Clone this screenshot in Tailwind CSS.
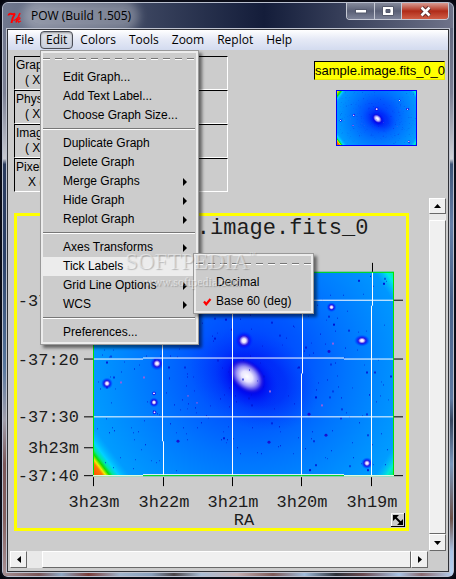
<!DOCTYPE html>
<html lang="en">
<head>
<meta charset="utf-8">
<title>POW (Build 1.505)</title>
<script src="https://cdn.jsdelivr.net/npm/@tailwindcss/browser@4"></script>
</head>
<body class="h-screen overflow-hidden bg-[#05060f] text-black">
<div class="flex h-full flex-col overflow-hidden rounded-lg border-2 border-[#0b0d18] bg-[#6b7287]">
<div class="flex min-h-0 flex-1 flex-col rounded-md border border-[#b9bfce]">

  <header class="flex h-[25px] shrink-0 justify-between rounded-t-md bg-linear-to-r from-[#70788e] via-[#141d3a] via-58% to-[#6f7389] pr-1">
    <div class="flex items-center gap-2 pl-1">
      <svg class="mt-1 h-[14px] w-4" viewBox="0 0 16 14" fill="none" stroke="#f00" aria-hidden="true">
        <path d="M1.500 4.500C1.500 2.500 3.500 2.500 5 3C6.500 3.300 7.500 3 8 2.500C6 5.500 5 8 4.500 12" stroke-width="1.900"/><path d="M13 2L9 11.500" stroke-width="1.700"/><path d="M6.500 9.500L9 8.500C10.500 6.500 13 6 13 7.200C13 8.500 10.500 8.800 10.500 8.800L11.500 11.200L14 10" stroke-width="1.300"/>
      </svg>
      <h1 class="rounded-full bg-white/30 font-['Open_Sans',sans-serif] text-[12px] leading-4 shadow-[0_0_10px_8px_rgba(255,255,255,0.3)]">POW (Build 1.505)</h1>
    </div>
    <div class="flex h-[17px] overflow-hidden rounded-b border border-t-0 border-[#c5c9d4]">
      <button class="grid w-7 place-items-center border-r border-[#c5c9d4] bg-linear-to-b from-[#858a9b] via-[#5a6076] via-50% to-[#7c8297]" aria-label="Minimize"><svg width="12" height="6" viewBox="0 0 12 6" aria-hidden="true"><rect x=".5" y="1.500" width="11" height="3.500" fill="#fff" stroke="#555a6c"/></svg></button>
      <button class="grid w-[27px] place-items-center border-r border-[#c5c9d4] bg-linear-to-b from-[#858a9b] via-[#5a6076] via-50% to-[#7c8297]" aria-label="Maximize"><svg width="12" height="10" viewBox="0 0 12 10" aria-hidden="true"><path fill="#fff" stroke="#555a6c" fill-rule="evenodd" d="M.5.5h11v9H.5zM4 3.500v3h4v-3z"/></svg></button>
      <button class="grid w-[46px] place-items-center bg-linear-to-b from-[#d79a92] via-[#b02a18] via-50% to-[#cf5c45]" aria-label="Close"><svg width="13" height="11" viewBox="0 0 13 11" aria-hidden="true"><path d="M2.500 1.500L10.500 9.500M10.500 1.500L2.500 9.500" stroke="#5a2a2a" stroke-width="4.500"/><path d="M2.500 1.500L10.500 9.500M10.500 1.500L2.500 9.500" stroke="#fff" stroke-width="2.600"/></svg></button>
    </div>
  </header>

  <div class="flex min-h-0 flex-1">
    <div class="w-[3px] shrink-0 bg-[linear-gradient(to_bottom,#6f778e_0%,#7b8094_12%,#c6c8d0_24%,#2a3a5c_25%,#2b4068_42%,#56759c_62%,#a09eab_72%,#7a5658_80%,#85605f_90%,#a58f93_100%)]"></div>

    <main class="flex min-w-0 flex-1 flex-col border border-[#bfc3cf]">
    <div class="flex min-h-0 flex-1 flex-col border border-[#2e3036] bg-[#cccccc] pb-[3px] font-['Liberation_Sans',Arial,sans-serif] text-[12px]">

      <nav class="relative z-10 flex h-5 shrink-0 bg-linear-to-b from-white via-[#e6eaf6] via-45% to-[#d3dbef] font-['Open_Sans',sans-serif] text-[12px] leading-5">
        <button class="pr-[6px] pl-[7px]">File</button>
        <div class="relative">
          <button class="h-[18px] rounded-sm border border-[#4a4d55] bg-linear-to-b from-[#e4e6ea] to-[#c9d0df] px-[5px] leading-4 shadow-[inset_0_1px_2px_rgba(0,0,0,0.35)]" aria-expanded="true">Edit</button>

          <div role="menu" class="absolute top-5 left-0 w-[159px] border border-[#999] bg-[#cccccc] font-['Liberation_Sans',Arial,sans-serif] text-[12px] leading-[19px] shadow-[3px_3px_3px_rgba(0,0,0,0.5)]">
            <div class="border-2 border-[#ececec] pr-px">
              <div class="h-[15px] pt-[5px]"><div class="h-px bg-[repeating-linear-gradient(to_right,#777_0_7px,transparent_7px_12px)]"></div><div class="h-px bg-[repeating-linear-gradient(to_right,#fff_0_7px,transparent_7px_12px)]"></div></div>
              <button role="menuitem" class="block w-full pl-5 text-left">Edit Graph...</button>
              <button role="menuitem" class="block w-full pl-5 text-left">Add Text Label...</button>
              <button role="menuitem" class="block w-full pl-5 text-left">Choose Graph Size...</button>
              <hr class="mt-[3px] mb-1 h-[2px] border-0 border-t border-b border-t-[#777] border-b-white">
              <button role="menuitem" class="block w-full pl-5 text-left">Duplicate Graph</button>
              <button role="menuitem" class="block w-full pl-5 text-left">Delete Graph</button>
              <button role="menuitem" class="flex w-full items-center justify-between pr-2 pl-5">Merge Graphs<svg width="4" height="8" viewBox="0 0 4 8" aria-hidden="true"><path d="M0 0L4 4L0 8z"/></svg></button>
              <button role="menuitem" class="flex w-full items-center justify-between pr-2 pl-5">Hide Graph<svg width="4" height="8" viewBox="0 0 4 8" aria-hidden="true"><path d="M0 0L4 4L0 8z"/></svg></button>
              <button role="menuitem" class="flex w-full items-center justify-between pr-2 pl-5">Replot Graph<svg width="4" height="8" viewBox="0 0 4 8" aria-hidden="true"><path d="M0 0L4 4L0 8z"/></svg></button>
              <hr class="mt-[3px] mb-1 h-[2px] border-0 border-t border-b border-t-[#777] border-b-white">
              <button role="menuitem" class="flex w-full items-center justify-between pr-2 pl-5">Axes Transforms<svg width="4" height="8" viewBox="0 0 4 8" aria-hidden="true"><path d="M0 0L4 4L0 8z"/></svg></button>
              <button role="menuitem" class="block w-full bg-[#ececec] pl-5 text-left" aria-expanded="true">Tick Labels</button>
              <button role="menuitem" class="flex w-full items-center justify-between pr-2 pl-5">Grid Line Options<svg width="4" height="8" viewBox="0 0 4 8" aria-hidden="true"><path d="M0 0L4 4L0 8z"/></svg></button>
              <button role="menuitem" class="flex w-full items-center justify-between pr-2 pl-5">WCS<svg width="4" height="8" viewBox="0 0 4 8" aria-hidden="true"><path d="M0 0L4 4L0 8z"/></svg></button>
              <hr class="mt-[3px] mb-1 h-[2px] border-0 border-t border-b border-t-[#777] border-b-white">
              <button role="menuitem" class="block w-full pl-5 text-left">Preferences...</button>
            </div>

            <div role="menu" class="absolute top-[202px] left-[152px] w-[121px] border border-[#999] bg-[#cccccc] shadow-[3px_3px_3px_rgba(0,0,0,0.5)]">
              <div class="border-2 border-[#ececec]">
                <div class="h-[17px] pt-[7px]"><div class="h-px bg-[repeating-linear-gradient(to_right,#777_0_7px,transparent_7px_12px)]"></div><div class="h-px bg-[repeating-linear-gradient(to_right,#fff_0_7px,transparent_7px_12px)]"></div></div>
                <button role="menuitemcheckbox" aria-checked="false" class="block w-full pl-5 text-left">Decimal</button>
                <button role="menuitemcheckbox" aria-checked="true" class="flex w-full items-center gap-1 pl-[7px] text-left"><svg width="9" height="8" viewBox="0 0 9 8" fill="none" stroke="#f00" stroke-width="2.200" aria-hidden="true"><path d="M1 3.500L3.200 6.300L7.500 1"/></svg>Base 60 (deg)</button>
              </div>
            </div>

            <div class="pointer-events-none absolute top-[199px] left-[84px] w-[136px] font-['Liberation_Serif',serif]">
              <p class="text-[23px] leading-6 whitespace-nowrap text-white/45 [text-shadow:1px_1px_1px_rgba(90,90,90,0.35)]">SOFTPEDIA<sup class="-top-3 text-[7px]">™</sup></p>
              <p class="pl-5 text-[12px] leading-4 text-white/50 [text-shadow:1px_1px_1px_rgba(90,90,90,0.4)]">www.softpedia.com</p>
            </div>
          </div>
        </div>
        <button class="pr-[6px] pl-[7px]">Colors</button>
        <button class="pr-[6px] pl-[7px]">Tools</button>
        <button class="pr-[6px] pl-[7px]">Zoom</button>
        <button class="pr-[6px] pl-[7px]">Replot</button>
        <button class="pr-[6px] pl-[7px]">Help</button>
      </nav>

      <section class="flex h-[148px] shrink-0 justify-between pt-[6px] pr-[3px] pl-[6px] leading-[15px]">
        <dl class="w-[214px]">
          <div class="h-[34px] border border-t-black border-r-white border-b-white border-l-black pt-px pl-px"><dt>Graph</dt><dd class="pl-[9px]">( X, Y )</dd></div>
          <div class="h-[34px] border border-t-black border-r-white border-b-white border-l-black pt-px pl-px"><dt>Physical</dt><dd class="pl-[9px]">( X, Y )</dd></div>
          <div class="h-[34px] border border-t-black border-r-white border-b-white border-l-black pt-px pl-px"><dt>Image</dt><dd class="pl-[9px]">( X, Y )</dd></div>
          <div class="h-[34px] border border-t-black border-r-white border-b-white border-l-black pt-px pl-px"><dt>Pixel</dt><dd class="pl-3">X ( x, y )</dd></div>
        </dl>
        <figure class="flex w-[131px] flex-col pt-[5px]">
          <figcaption class="h-[19px] border border-t-black border-r-[#e8e800] border-b-[#e8e800] border-l-black bg-[#ffff00] text-[13px] leading-[17px] whitespace-nowrap">sample.image.fits_0_0</figcaption>
          <svg class="mt-[10px] ml-[22px] h-14 w-[81px] border border-[#0000ff]" viewBox="93 272 301 205" preserveAspectRatio="none" role="img" aria-label="Image thumbnail"><use href="#sky"/></svg>
        </figure>
      </section>

      <section class="flex min-h-0 flex-1 justify-between pr-[2px] pl-[6px]">
        <div class="mt-[15px] mr-5 mb-5 flex-1 border-[3px] border-[#ffff00]">
          <svg class="block h-full w-full" viewBox="17 216 389 313" preserveAspectRatio="none" role="img" aria-label="sample.image.fits_0 plot">
            <defs>
              <radialGradient id="bg" gradientUnits="userSpaceOnUse" cx="250" cy="365" r="190"><stop offset="0" stop-color="#0038ff"/><stop offset=".3" stop-color="#0058ff"/><stop offset=".5" stop-color="#0074ff"/><stop offset=".75" stop-color="#0090ff"/><stop offset="1" stop-color="#00aaff"/></radialGradient>
              <radialGradient id="halo"><stop offset="0" stop-color="#0000e8"/><stop offset=".5" stop-color="#0008f0" stop-opacity=".85"/><stop offset="1" stop-color="#0030ff" stop-opacity="0"/></radialGradient>
              <radialGradient id="core"><stop offset="0" stop-color="#fff"/><stop offset=".3" stop-color="#e8e4ff"/><stop offset=".55" stop-color="#9c94f4"/><stop offset=".8" stop-color="#2a20e4"/><stop offset="1" stop-color="#0000e0" stop-opacity="0"/></radialGradient>
              <radialGradient id="star"><stop offset="0" stop-color="#fff"/><stop offset=".2" stop-color="#e8e0ff"/><stop offset=".48" stop-color="#2818e0"/><stop offset=".65" stop-color="#0010ff" stop-opacity=".6"/><stop offset="1" stop-color="#0040ff" stop-opacity="0"/></radialGradient>
              <linearGradient id="bl" gradientUnits="userSpaceOnUse" x1="93" y1="477" x2="117" y2="459"><stop offset=".1" stop-color="#ff5a00"/><stop offset=".28" stop-color="#ff7800"/><stop offset=".36" stop-color="#f0f000"/><stop offset=".46" stop-color="#10dd00"/><stop offset=".56" stop-color="#00e6a0"/><stop offset=".7" stop-color="#00d2ff"/><stop offset="1" stop-color="#00b4ff" stop-opacity="0"/></linearGradient>
              <linearGradient id="tl" gradientUnits="userSpaceOnUse" x1="93" y1="272" x2="117" y2="290"><stop offset=".1" stop-color="#ffe000"/><stop offset=".4" stop-color="#10dd00"/><stop offset=".6" stop-color="#00d2ff"/><stop offset=".9" stop-color="#00b4ff" stop-opacity="0"/></linearGradient>
              <linearGradient id="tr" gradientUnits="userSpaceOnUse" x1="394" y1="272" x2="380" y2="281"><stop offset="0" stop-color="#00ff90"/><stop offset=".4" stop-color="#00e8e8"/><stop offset="1" stop-color="#00c0ff" stop-opacity="0"/></linearGradient>
              <linearGradient id="br" gradientUnits="userSpaceOnUse" x1="394" y1="477" x2="380" y2="468"><stop offset="0" stop-color="#00f060"/><stop offset=".4" stop-color="#00e8d8"/><stop offset="1" stop-color="#00c0ff" stop-opacity="0"/></linearGradient>
              <g id="sky">
                <rect x="93" y="272" width="301" height="205" fill="url(#bg)"/>
                <ellipse cx="254" cy="380" rx="68" ry="48" fill="url(#halo)" opacity=".45" transform="rotate(25 254 380)"/>
                <ellipse cx="248" cy="380" rx="36" ry="27" fill="url(#halo)" transform="rotate(40 248 380)"/>
                <ellipse cx="247" cy="377" rx="21" ry="15" fill="url(#core)" transform="rotate(42 247 377)"/>
                <rect x="93" y="432" width="60" height="45" fill="url(#bl)"/>
                <rect x="93" y="272" width="40" height="40" fill="url(#tl)"/>
                <rect x="364" y="272" width="30" height="30" fill="url(#tr)"/>
                <rect x="364" y="447" width="30" height="30" fill="url(#br)"/>
                <g id="specks" fill="#0010d0"></g>
                <g fill="url(#star)">
                  <circle cx="244" cy="341" r="10"/><ellipse cx="362" cy="341" rx="8" ry="6"/><circle cx="331.500" cy="307.500" r="5"/><circle cx="157" cy="364" r="7"/><circle cx="107" cy="384" r="6"/><circle cx="154" cy="403" r="5"/><circle cx="367" cy="464" r="6"/><circle cx="154.500" cy="413" r="2.500"/><circle cx="154" cy="394" r="2.500"/>
                </g>
                <g fill="#1a10d0"><circle cx="269" cy="443" r="1.500"/><circle cx="326" cy="436" r="1.500"/><circle cx="178" cy="442" r="1.500"/><circle cx="329" cy="352" r="1.500"/><circle cx="309" cy="415" r="1.500"/></g>
                <g fill="#9060e0"><rect x="120" y="382" width="2" height="2"/><rect x="143" y="377" width="2" height="2"/><rect x="196" y="403" width="2" height="1"/><rect x="269" y="391" width="2" height="2"/><rect x="332" y="343" width="2" height="2"/><rect x="321" y="405" width="2" height="2"/><rect x="187" y="396" width="2" height="1"/></g>
              </g>
            </defs>
            <use href="#sky"/>
            <g fill="none" stroke="#fff">
              <path d="M162.500 272V442M163.500 442V477M232.500 272V477M302.500 272V374M301.500 374V477M372.500 272V306M371.500 306V477"/>
              <path d="M93 300.500H394M93 359.500H143M143 358.500H344M344 359.500H394M93 417.500H394M93 476.500H143M143 475.500H344M344 476.500H394"/>
            </g>
            <rect x="93.500" y="272.500" width="300" height="204" fill="none" stroke="#00e400"/>
            <path d="M93 476.500H143M344 476.500H394" stroke="#fff"/>
            <path fill="none" stroke="#000" d="M93.500 478V487M163.500 478V487M232.500 478V487M301.500 478V487M371.500 478V487M372.500 263V272M84 300.500H93M84 359.500H93M84 417.500H93M84 448.500H93M84 476.500H93M394 300.500H403M394 359.500H403M394 417.500H403M394 476.500H403"/>
            <g font-family="'Liberation Mono','Courier New',monospace" font-size="17" fill="#1c1c1c">
              <text x="243" y="234" text-anchor="middle" font-size="22">sample.image.fits_0</text>
              <g text-anchor="end"><text x="79" y="306">-37:10</text><text x="79" y="365">-37:20</text><text x="79" y="423">-37:30</text><text x="79" y="454">3h23m</text><text x="79" y="482">-37:40</text></g>
              <g text-anchor="middle"><text x="94" y="508">3h23m</text><text x="164" y="508">3h22m</text><text x="233" y="508">3h21m</text><text x="302" y="508">3h20m</text><text x="372" y="508">3h19m</text><text x="244" y="526">RA</text></g>
            </g>
            <g><rect x="391" y="514" width="14" height="14" fill="#000"/><rect x="391" y="514" width="13" height="13" fill="#fff"/><rect x="392" y="515" width="12" height="12" fill="#ccc"/><path d="M395 518L401 524" stroke="#000" stroke-width="2"/><path d="M393 516H399L393 522zM403 526H397L403 520z"/></g>
          </svg>
        </div>
        <div class="flex w-[17px] flex-col bg-[#e9e9e9]" role="scrollbar" aria-orientation="vertical" aria-valuenow="3">
          <button class="grid h-4 place-items-center border border-t-white border-r-[#696969] border-b-[#696969] border-l-white bg-[#f0f0f0]" aria-label="Scroll up"><svg width="7" height="4" viewBox="0 0 7 4" aria-hidden="true"><path d="M3.500 0L7 4H0z"/></svg></button>
          <div class="h-[6px]"></div>
          <div class="flex-1 border border-t-white border-r-[#696969] border-b-[#696969] border-l-white bg-[#f0f0f0]"></div>
          <button class="grid h-[17px] place-items-center border border-t-white border-r-[#696969] border-b-[#696969] border-l-white bg-[#f0f0f0]" aria-label="Scroll down"><svg width="7" height="4" viewBox="0 0 7 4" aria-hidden="true"><path d="M0 0H7L3.500 4z"/></svg></button>
        </div>
      </section>

      <div class="mr-5 ml-[2px] flex h-[17px] shrink-0 bg-[#e9e9e9]" role="scrollbar" aria-orientation="horizontal" aria-valuenow="4">
        <button class="grid w-[17px] place-items-center border border-t-white border-r-[#696969] border-b-[#696969] border-l-white bg-[#f0f0f0]" aria-label="Scroll left"><svg width="4" height="7" viewBox="0 0 4 7" aria-hidden="true"><path d="M4 0V7L0 3.500z"/></svg></button>
        <div class="w-[15px]"></div>
        <div class="flex-1 border border-t-white border-r-[#696969] border-b-[#696969] border-l-white bg-[#f0f0f0]"></div>
        <button class="grid w-[17px] place-items-center border border-t-white border-r-[#696969] border-b-[#696969] border-l-white bg-[#f0f0f0]" aria-label="Scroll right"><svg width="4" height="7" viewBox="0 0 4 7" aria-hidden="true"><path d="M0 0V7L4 3.500z"/></svg></button>
      </div>
    </div>
    </main>

    <div class="w-[3px] shrink-0 bg-[linear-gradient(to_bottom,#62687f_0%,#7b8094_12%,#d0d2d8_24%,#3d5578_25%,#6580a8_36%,#48628a_50%,#5e7aa2_68%,#35455e_72%,#7a98bd_80%,#6a5048_90%,#a9c4e6_96%,#b5d0f0_100%)]"></div>
  </div>
  <div class="h-[3px] shrink-0 rounded-b bg-[linear-gradient(to_right,#a58f93_0%,#7a5658_8%,#8fa8c4_13%,#7a3c38_19%,#9fb4cc_26%,#8aa0bc_33%,#4a4448_38%,#a8bcd4_44%,#c4b0b4_52%,#7e5a58_60%,#a0bcdc_67%,#2c3038_74%,#6a4a50_80%,#a9c4e6_88%,#8a6a70_93%,#b5d0f0_100%)]"></div>
</div>
</div>
<script>
  // Faint field stars, placed by a fixed-seed generator.
  let seed = 4711;
  const rnd = () => (seed = (seed * 16807) % 2147483647) / 2147483647;
  const group = document.getElementById('specks');
  for (let i = 0; i < 280; i++) {
    const r = document.createElementNS('http://www.w3.org/2000/svg', 'rect');
    const big = rnd() > 0.8;
    r.setAttribute('x', Math.round(96 + rnd() * 294));
    r.setAttribute('y', Math.round(275 + rnd() * 196));
    r.setAttribute('width', big ? 2 : 1);
    r.setAttribute('height', big ? 2 : 1);
    r.setAttribute('opacity', (0.5 + rnd() * 0.5).toFixed(2));
    group.appendChild(r);
  }
</script>
</body>
</html>
